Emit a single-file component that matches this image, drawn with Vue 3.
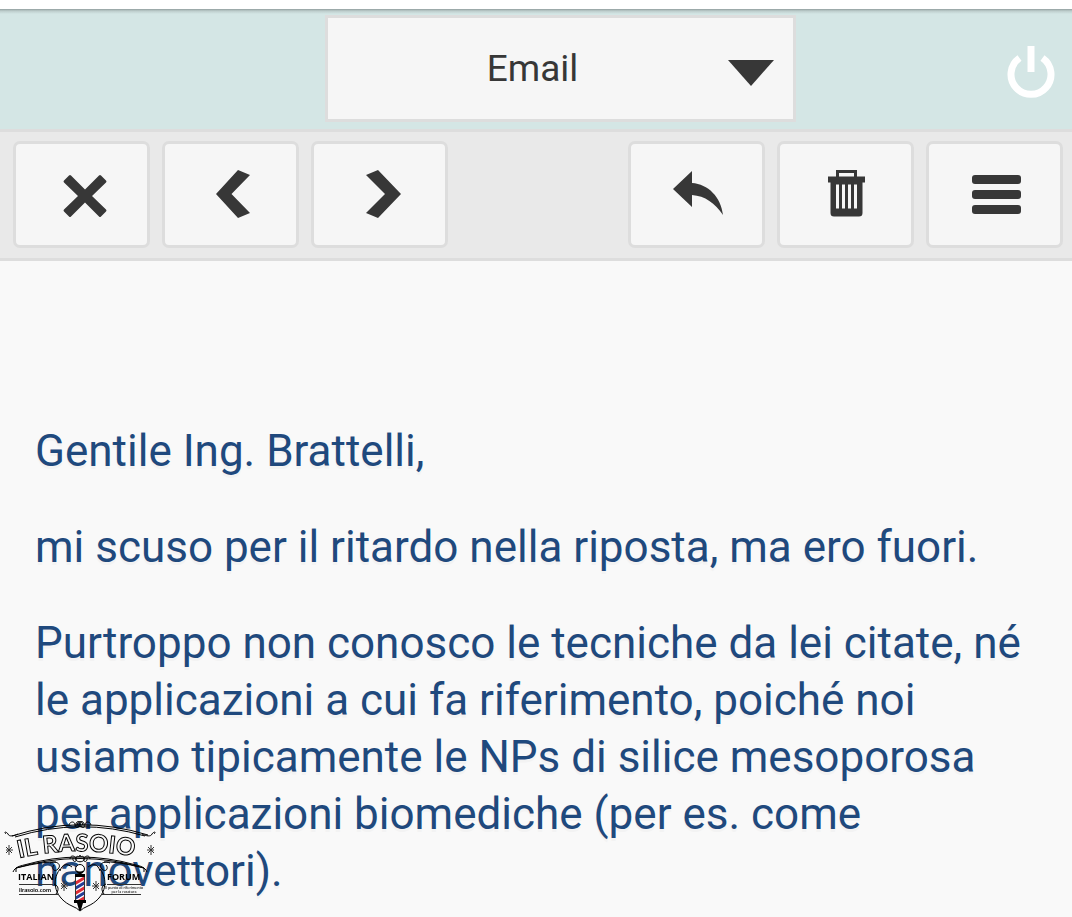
<script setup>
import { ref } from "vue";

const section = ref("Email");

const paragraphs = [
  "Gentile Ing. Brattelli,",
  "mi scuso per il ritardo nella riposta, ma ero fuori.",
  "Purtroppo non conosco le tecniche da lei citate, né le applicazioni a cui fa riferimento, poiché noi usiamo tipicamente le NPs di silice mesoporosa per applicazioni biomediche (per es. come nanovettori).",
];
</script>

<template>
  <div class="mail">
    <header class="topbar">
      <div class="section-picker">
        <select v-model="section" class="section-select" aria-label="Sezione">
          <option>Email</option>
        </select>
        <svg class="caret" viewBox="0 0 46 26" aria-hidden="true">
          <path d="M0 0H46L23 26Z" />
        </svg>
      </div>
      <button class="power" aria-label="Esci">
        <svg viewBox="0 0 48 52">
          <path
            d="M12.500 12A20 20 0 1 0 35.500 12"
            fill="none"
            stroke="#fff"
            stroke-width="7"
          />
          <path d="M20.5 0H27.5V26H20.5Z" fill="#fff" />
        </svg>
      </button>
    </header>

    <nav class="toolbar">
      <div class="group">
        <button class="tool" aria-label="Chiudi">
          <svg viewBox="0 0 136 106">
            <path
              d="M58 33.5 72 47.5 86 33.5Q87 32.5 88 33.5L93 38.5Q94 39.5 93 40.5L79 54 93 67.5Q94 68.5 93 69.5L88 74.5Q87 75.500 86 74.5L72 60.5 58 74.5Q57 75.500 56 74.5L51 69.5Q50 68.5 51 67.5L65 54 51 40.5Q50 39.5 51 38.5L56 33.5Q57 32.5 58 33.5Z"
            />
          </svg>
        </button>
        <button class="tool" aria-label="Precedente">
          <svg viewBox="0 0 136 106">
            <path d="M76 28 88 33 69.5 52 88 71 76 76 54 52Z" />
          </svg>
        </button>
        <button class="tool" aria-label="Successivo">
          <svg viewBox="0 0 136 106">
            <path d="M67 28 55 33 74 52 55 71 67 76 90 52Z" />
          </svg>
        </button>
      </div>
      <div class="group">
        <button class="tool" aria-label="Rispondi">
          <svg viewBox="0 0 136 106">
            <path d="M45 47 64 29V41C80 42 93 55 95 73C87 61 77 54 64 53V65Z" />
          </svg>
        </button>
        <button class="tool" aria-label="Elimina">
          <svg viewBox="0 0 136 106">
            <path
              fill-rule="evenodd"
              d="M59 28H80V34.500H88V40.500H85.500V71Q85.500 74.500 82 74.500H57Q53.500 74.500 53.500 71V40.500H51V34.500H59ZM62 31V34.500H77V31ZM59 42.500V66.500H62V42.500ZM65 42.500V66.500H68V42.500ZM71 42.500V66.500H74V42.500ZM77 42.500V66.500H80V42.500Z"
            />
          </svg>
        </button>
        <button class="tool" aria-label="Menu">
          <svg viewBox="0 0 136 106">
            <rect x="46" y="33" width="49" height="9" rx="3" />
            <rect x="46" y="48" width="49" height="9" rx="3" />
            <rect x="46" y="63" width="49" height="9" rx="3" />
          </svg>
        </button>
      </div>
    </nav>

    <main class="message">
      <p v-for="(text, i) in paragraphs" :key="i">{{ text }}</p>
    </main>

    <svg class="watermark" viewBox="0 0 170 105" role="img" aria-label="Il Rasoio Italian Forum">
      <defs>
        <path id="title-arc" d="M19 46Q80 32 146 47" />
        <clipPath id="pole-clip">
          <path d="M75.500 65H84.500V88H75.500Z" />
        </clipPath>
      </defs>

      <!-- upper banner edge -->
      <g class="line">
        <path d="M6 22C3 19 7 20 8 22C9 25 14 24 18 22" />
        <path d="M154 22C157 19 153 20 152 22C151 25 146 24 142 22" />
        <path d="M15 25Q80 5 145 24" />
        <path d="M12 24Q80 2 148 23" />
        <path d="M69 13C70 9 75 9 75 13S80 16 80 12S75 9 76 14M91 13C90 9 85 9 85 13S80 16 80 12S85 9 84 14" />
        <circle cx="80" cy="12" r="2.500" />
      </g>

      <text class="title">
        <textPath href="#title-arc">IL RASOIO</textPath>
      </text>

      <!-- side flourishes -->
      <g class="flourish">
        <path d="M9 33V43M6 35L12 41M12 35L6 41M6 38H13" />
        <path d="M151 33V43M148 35L154 41M154 35L148 41M147 38H154" />
      </g>

      <!-- lower banner edge -->
      <g class="line">
        <path d="M13 60C15 55 20 54 24 53Q80 37 136 53C140 54 145 55 147 60" />
        <path d="M16 56Q80 37 144 56" />
        <path d="M16 60V56Q45 49 56 50M144 60V56Q115 49 104 50" />
        <path d="M50 51C57 48 62 53 58 57S51 56 54 53M110 51C103 48 98 53 102 57S109 56 106 53" />
        <path d="M70 47C70 43 75 43 76 47S72 50 73 46M90 47C90 43 85 43 84 47S88 50 87 46" />
        <path d="M76 46C77 42 80 47 80 43C80 47 83 42 84 46C86 51 74 51 76 46" />
      </g>

      <!-- ring around the pole -->
      <g class="line">
        <path d="M60 57C50 70 56 87 72 94Q77 96 80 99Q83 96 88 94C104 87 110 70 100 57" />
        <path d="M60 59C62 52 67 51 72 55M100 59C98 52 93 51 88 55" />
        <path d="M54 72C59 74 59 78 56 82M106 72C101 74 101 78 104 82" />
      </g>
      <g class="flourish">
        <path d="M64 69V79M61 71L67 77M67 71L61 77M61 74H68" />
        <path d="M96 69V79M93 71L99 77M99 71L93 77M92 74H99" />
      </g>

      <text class="word" x="18" y="68">ITALIAN</text>
      <text class="word" x="107" y="68">FORUM</text>
      <path class="rule" d="M19 72.500H53M19 82.500H59M107 72.500H141M101 82.500H141" />
      <text class="site" x="19" y="80">ilrasoio.com</text>
      <text class="tagline" x="124" y="77">Il punto di riferimento</text>
      <text class="tagline" x="124" y="81">per la rasatura</text>

      <!-- barber pole -->
      <circle cx="80" cy="57" r="4.500" fill="#fff" stroke="#000" />
      <path d="M76 58Q80 61 84 58Q82 62 80 62Q78 62 76 58Z" />
      <path d="M75 62H85V65H75ZM74 88H86V91H74ZM77 91H83L81 98H79Z" />
      <g clip-path="url(#pole-clip)">
        <path d="M75 65H85V88H75Z" fill="#fff" />
        <path
          d="M74 72L86 65M74 82L86 75M74 92L86 85"
          stroke="#e02c35"
          stroke-width="3"
        />
        <path
          d="M74 77L86 70M74 87L86 80"
          stroke="#263e94"
          stroke-width="3"
        />
      </g>
      <path class="rule" d="M75.500 65V88M84.500 65V88" />
    </svg>
  </div>
</template>

<style>
body {
  margin: 0;
  background: #f9f9f9;
}
</style>

<style scoped>
.mail {
  font-family: Roboto, "Liberation Sans", sans-serif;
  color: #373737;
  border-top: 9px solid #fff;
}

.topbar {
  display: grid;
  grid-template-columns: 1fr 471px 1fr;
  align-items: start;
  box-sizing: border-box;
  height: 120px;
  padding: 6px 17px 0 66px;
  background: linear-gradient(#919e9f, #bdcdcc 2px, #d4e6e5 5px);
}

.section-picker {
  position: relative;
  grid-column: 2;
}

.section-select {
  display: block;
  box-sizing: border-box;
  width: 100%;
  height: 107px;
  padding: 0 56px 0 0;
  border: 3px solid #ddd;
  border-radius: 0;
  background: #f6f6f6;
  color: inherit;
  font: inherit;
  font-size: 37px;
  text-align: center;
  text-align-last: center;
  appearance: none;
}

.caret {
  position: absolute;
  top: 45px;
  right: 22px;
  width: 46px;
  height: 26px;
  fill: #373737;
  pointer-events: none;
}

.power {
  justify-self: end;
  padding: 31px 0 0;
  border: none;
  background: transparent;
  cursor: pointer;
}

.power svg {
  display: block;
  width: 48px;
  height: 52px;
}

.toolbar {
  display: flex;
  justify-content: space-between;
  padding: 9px 9px 10px 13px;
  border: solid #ddd;
  border-width: 3px 0;
  background: #e9e9e9;
}

.group {
  display: flex;
  gap: 12px;
}

.tool {
  box-sizing: border-box;
  width: 137px;
  height: 107px;
  padding: 0;
  border: 3px solid #ddd;
  border-radius: 7px;
  background: #f6f6f6;
  cursor: pointer;
}

.tool svg {
  display: block;
  width: 136px;
  height: 106px;
  margin: -3px;
  fill: #373737;
}

.message {
  padding: 162px 35px 0;
  color: #1f497d;
  font-size: 44px;
  line-height: 57px;
  text-shadow: 0 3px 0 #f3f3f3;
}

.message p {
  margin: 0 0 39px;
}

.message p:last-child {
  margin-bottom: 0;
}

.watermark {
  position: fixed;
  left: 0;
  bottom: 0;
  width: 170px;
  height: 105px;
  pointer-events: none;
}

.line {
  fill: none;
  stroke: #000;
  stroke-width: 1;
}

.flourish,
.rule {
  fill: none;
  stroke: #333;
  stroke-width: 1;
}

.title {
  font-family: Lato, sans-serif;
  font-size: 24px;
  font-weight: 700;
  fill: #f9f9f9;
  stroke: #000;
  stroke-width: 1;
}

.word {
  font-family: "Open Sans", sans-serif;
  font-size: 9px;
  font-weight: 700;
}

.site {
  font-family: Lato, sans-serif;
  font-size: 6px;
  font-weight: 700;
}

.tagline {
  font-family: Lato, sans-serif;
  font-size: 4px;
  text-anchor: middle;
}
</style>
